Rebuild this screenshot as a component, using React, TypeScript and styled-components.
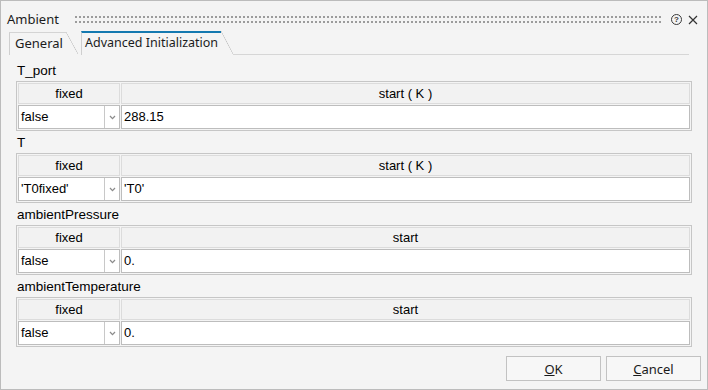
import React from 'react';
import styled, { createGlobalStyle } from 'styled-components';

const GlobalStyle = createGlobalStyle`
    body {
        margin: 0;
        background: #f4f4f4;
    }
`
const Window = styled.div`
    width: 708px;
    height: 390px;
    box-sizing: border-box;
    border: 1px solid #bcbcbc;
    background: #f4f4f4;
    display: flex;
    flex-direction: column;
    font-family: "Noto Sans", "Liberation Sans", sans-serif;
    color: #1c1c1c;
`
const TitleBar = styled.div`
    display: flex;
    align-items: flex-start;
    height: 30px;
    padding: 0 9px 0 6px;
`
const Title = styled.div`
    font-size: 13px;
    line-height: 18px;
    margin-top: 9px;
`
const Grip = styled.div`
    flex: 1;
    height: 10px;
    margin: 15px 9px 0 16px;
    background-image: conic-gradient(from 0deg at 2px 2px, transparent 75%, #9c9c9c 0);
    background-size: 4px 5px;
`
const Help = styled.div`
    width: 9px;
    height: 9px;
    margin: 13px 6px 0 0;
    border: 1px solid #3a3a3a;
    border-radius: 50%;
    font-family: "Liberation Sans", sans-serif;
    font-size: 8px;
    font-weight: bold;
    line-height: 9px;
    text-align: center;
    color: #3a3a3a;
`
const CloseIcon = styled.svg`
    margin-top: 14px;
`
const TabBar = styled.div`
    display: flex;
    align-items: flex-end;
    height: 24px;
    padding-left: 8px;
`
const Tab = styled.div<{ $active?: boolean; $width: number }>`
    position: relative;
    box-sizing: border-box;
    width: ${p => p.$width}px;
    height: ${p => (p.$active ? 24 : 23)}px;
    margin-right: ${p => (p.$active ? 12 : 15)}px;
    padding-left: ${p => (p.$active ? 3 : 5)}px;
    border-left: 1px solid #cfcfcf;
    border-top: ${p => (p.$active ? '2px solid #1479b0' : '1px solid #d4d4d4')};
    font-size: ${p => (p.$active ? 12.5 : 13)}px;
    line-height: 20px;
    white-space: nowrap;
    &::after {
        content: '';
        position: absolute;
        top: ${p => (p.$active ? -2 : -1)}px;
        right: -12px;
        bottom: 1px;
        width: 12px;
        background: linear-gradient(to top right, transparent calc(50% - 0.6px), #c4c4c4 50%, transparent calc(50% + 0.6px));
    }
`
const TabLine = styled.div`
    flex: 1;
    height: 24px;
    margin-right: 18px;
    border-bottom: 1px solid #d6d6d6;
    box-sizing: border-box;
`
const Content = styled.div`
    padding: 4px 15px 0;
    font-family: "Liberation Sans", Arial, sans-serif;
    font-size: 13px;
    color: #000;
`
const Label = styled.div`
    height: 22px;
    line-height: 23px;
    padding-left: 1px;
    font-size: 13.5px;
`
const Table = styled.div`
    display: grid;
    grid-template-columns: 102px 1fr;
    column-gap: 1px;
    row-gap: 1px;
    padding: 1px;
    border: 1px solid #c6c6c6;
`
const HeadCell = styled.div`
    box-sizing: border-box;
    height: 21px;
    line-height: 20px;
    text-align: center;
    background: #f2f2f2;
    border: 1px solid #dcdcdc;
`
const Select = styled.div`
    box-sizing: border-box;
    height: 24px;
    display: flex;
    background: #fff;
    border: 1px solid #bdbdbd;
`
const SelectValue = styled.div`
    flex: 1;
    padding-left: 2px;
    line-height: 22px;
`
const Arrow = styled.div`
    width: 14px;
    border-left: 1px solid #c8c8c8;
    display: flex;
    align-items: center;
    justify-content: center;
`
const Input = styled.div`
    box-sizing: border-box;
    height: 24px;
    padding-left: 2px;
    line-height: 22px;
    background: #fff;
    border: 1px solid #bdbdbd;
`
const Footer = styled.div`
    display: flex;
    justify-content: flex-end;
    gap: 5px;
    padding: 9px 6px 0;
`
const Button = styled.button`
    width: 95px;
    height: 25px;
    padding: 0;
    border: 1px solid #c2c2c2;
    background: #f7f7f7;
    font-family: "Noto Sans", "Liberation Sans", sans-serif;
    font-size: 13px;
    color: #1a1a1a;
`

type Param = {
    name: string;
    start: string;
    fixed: string;
    value: string;
}

const params: Param[] = [
    { name: 'T_port', start: 'start ( K )', fixed: 'false', value: '288.15' },
    { name: 'T', start: 'start ( K )', fixed: "'T0fixed'", value: "'T0'" },
    { name: 'ambientPressure', start: 'start', fixed: 'false', value: '0.' },
    { name: 'ambientTemperature', start: 'start', fixed: 'false', value: '0.' },
];

const Chevron = () => (
    <svg width="7" height="5" viewBox="0 0 7 5">
        <polyline points="1,1 3.5,3.6 6,1" fill="none" stroke="#8c8c8c" strokeWidth="1.3" />
    </svg>
);

export default function App() {
    return (
        <Window>
            <GlobalStyle />
            <TitleBar>
                <Title>Ambient</Title>
                <Grip />
                <Help>?</Help>
                <CloseIcon width="10" height="10" viewBox="0 0 10 10">
                    <path d="M1 1 L9 9 M9 1 L1 9" stroke="#333" strokeWidth="1.2" />
                </CloseIcon>
            </TitleBar>
            <TabBar>
                <Tab $width={57}>General</Tab>
                <Tab $active $width={140}>Advanced Initialization</Tab>
                <TabLine />
            </TabBar>
            <Content>
                {params.map(p => (
                    <div key={p.name}>
                        <Label>{p.name}</Label>
                        <Table>
                            <HeadCell>fixed</HeadCell>
                            <HeadCell>{p.start}</HeadCell>
                            <Select>
                                <SelectValue>{p.fixed}</SelectValue>
                                <Arrow><Chevron /></Arrow>
                            </Select>
                            <Input>{p.value}</Input>
                        </Table>
                    </div>
                ))}
            </Content>
            <Footer>
                <Button><u>O</u>K</Button>
                <Button><u>C</u>ancel</Button>
            </Footer>
        </Window>
    );
}
